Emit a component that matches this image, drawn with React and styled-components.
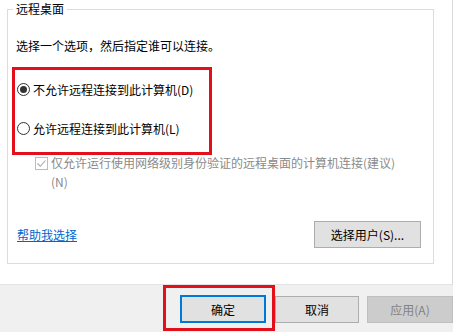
import styled, { createGlobalStyle } from 'styled-components';

const GlobalStyle = createGlobalStyle`
  html, body {
    margin: 0;
    padding: 0;
    background: #f0f0f0;
  }
  body {
    font-family: "Noto Sans CJK SC", "Microsoft YaHei", sans-serif;
    font-size: 12px;
    color: #000;
  }
`;

export default function App() {
  return (
    <Page>
      <GlobalStyle />
      <TabPage>
        <Group>
          <Legend>远程桌面</Legend>
          <GroupBody>
            <Description>选择一个选项，然后指定谁可以连接。</Description>
            {/* red highlight round the radio group */}
            <Highlight>
              <Option>
                <Radio checked />
                <span>不允许远程连接到此计算机(D)</span>
              </Option>
              <Option>
                <Radio />
                <span>允许远程连接到此计算机(L)</span>
              </Option>
            </Highlight>
            <CheckRow>
              <CheckBox>
                <svg width="11" height="11" viewBox="0 0 11 11">
                  <path d="M1.5 5.5 L4.3 8.3 L9.5 2.5" fill="none" stroke="#a8a8a8" strokeWidth="1.1" />
                </svg>
              </CheckBox>
              <CheckText>仅允许运行使用网络级别身份验证的远程桌面的计算机连接(建议) (N)</CheckText>
            </CheckRow>
            <BottomRow>
              <HelpLink href="#">帮助我选择</HelpLink>
              <Button $width={107}>选择用户(S)...</Button>
            </BottomRow>
          </GroupBody>
        </Group>
      </TabPage>
      <Footer>
        <Highlight $footer>
          <Button $width={86} $default>确定</Button>
        </Highlight>
        <FooterButton>取消</FooterButton>
        <FooterButton $disabled>应用(A)</FooterButton>
      </Footer>
    </Page>
  );
}

const Page = styled.div`
  width: 453px;
  height: 332px;
  display: flex;
  flex-direction: column;
  overflow: hidden;
`;

const TabPage = styled.div`
  box-sizing: border-box;
  height: 285px;
  padding: 1px 18px 0 7px;
  background: #fff;
  border-right: 1px solid #dadada;
  border-bottom: 1px solid #e3e3e3;
`;

const Group = styled.fieldset`
  box-sizing: border-box;
  height: 263px;
  margin: 0;
  padding: 0;
  border: 1px solid #dcdcdc;
`;

const Legend = styled.legend`
  margin-left: 5px;
  padding: 0 3px;
  line-height: 16px;
`;

const GroupBody = styled.div`
  display: flex;
  flex-direction: column;
`;

const Description = styled.div`
  margin: 21px 0 0 8px;
  line-height: 16px;
`;

const Highlight = styled.div`
  box-sizing: border-box;
  display: flex;
  flex-direction: column;
  border: 3px solid #e3101b;
  ${p => p.$footer ? `
    width: 114px;
    height: 46px;
    padding: 7px 0 0 14px;
  ` : `
    width: 200px;
    margin: 13px 0 0 4px;
    padding: 9px 0 14px 2px;
    gap: 19px;
  `}
`;

const Option = styled.label`
  display: flex;
  align-items: center;
  gap: 3px;
  height: 20px;
`;

const Radio = styled.span`
  box-sizing: border-box;
  position: relative;
  width: 13px;
  height: 13px;
  border: 1px solid #333;
  border-radius: 50%;
  background: #fff;
  flex: none;

  &::after {
    content: '';
    display: ${p => (p.checked ? 'block' : 'none')};
    position: absolute;
    left: 2px;
    top: 2px;
    width: 7px;
    height: 7px;
    border-radius: 50%;
    background: #333;
  }
`;

const CheckRow = styled.div`
  display: flex;
  align-items: flex-start;
  gap: 3px;
  margin: -2px 0 0 27px;
  color: #8a8a8a;
`;

const CheckBox = styled.span`
  box-sizing: border-box;
  width: 13px;
  height: 13px;
  margin-top: 4px;
  border: 1px solid #bcbcbc;
  display: flex;
  align-items: center;
  justify-content: center;
  flex: none;
`;

const CheckText = styled.span`
  width: 352px;
  line-height: 19px;
`;

const BottomRow = styled.div`
  display: flex;
  justify-content: space-between;
  align-items: center;
  margin-top: 30px;
  padding: 0 12px 0 9px;
`;

const HelpLink = styled.a`
  color: #0066cc;
  text-decoration: underline;
  line-height: 16px;
`;

const Button = styled.button`
  box-sizing: border-box;
  width: ${p => p.$width}px;
  height: ${p => (p.$default ? 28 : 27)}px;
  padding: 0;
  font: inherit;
  color: #000;
  background: #e1e1e1;
  border: ${p => (p.$default ? '2px solid #0078d7' : '1px solid #adadad')};
`;

const Footer = styled.div`
  flex: 1;
  display: flex;
  align-items: flex-start;
  padding-left: 163px;
`;

const FooterButton = styled.button`
  box-sizing: border-box;
  flex: none;
  width: 84px;
  height: 27px;
  margin-top: 11px;
  padding: 0;
  font: inherit;
  background: ${p => (p.$disabled ? '#cccccc' : '#e1e1e1')};
  color: ${p => (p.$disabled ? '#838383' : '#000')};
  border: 1px solid ${p => (p.$disabled ? '#bfbfbf' : '#adadad')};

  & + & {
    width: 86px;
    margin-left: 8px;
  }
`;
